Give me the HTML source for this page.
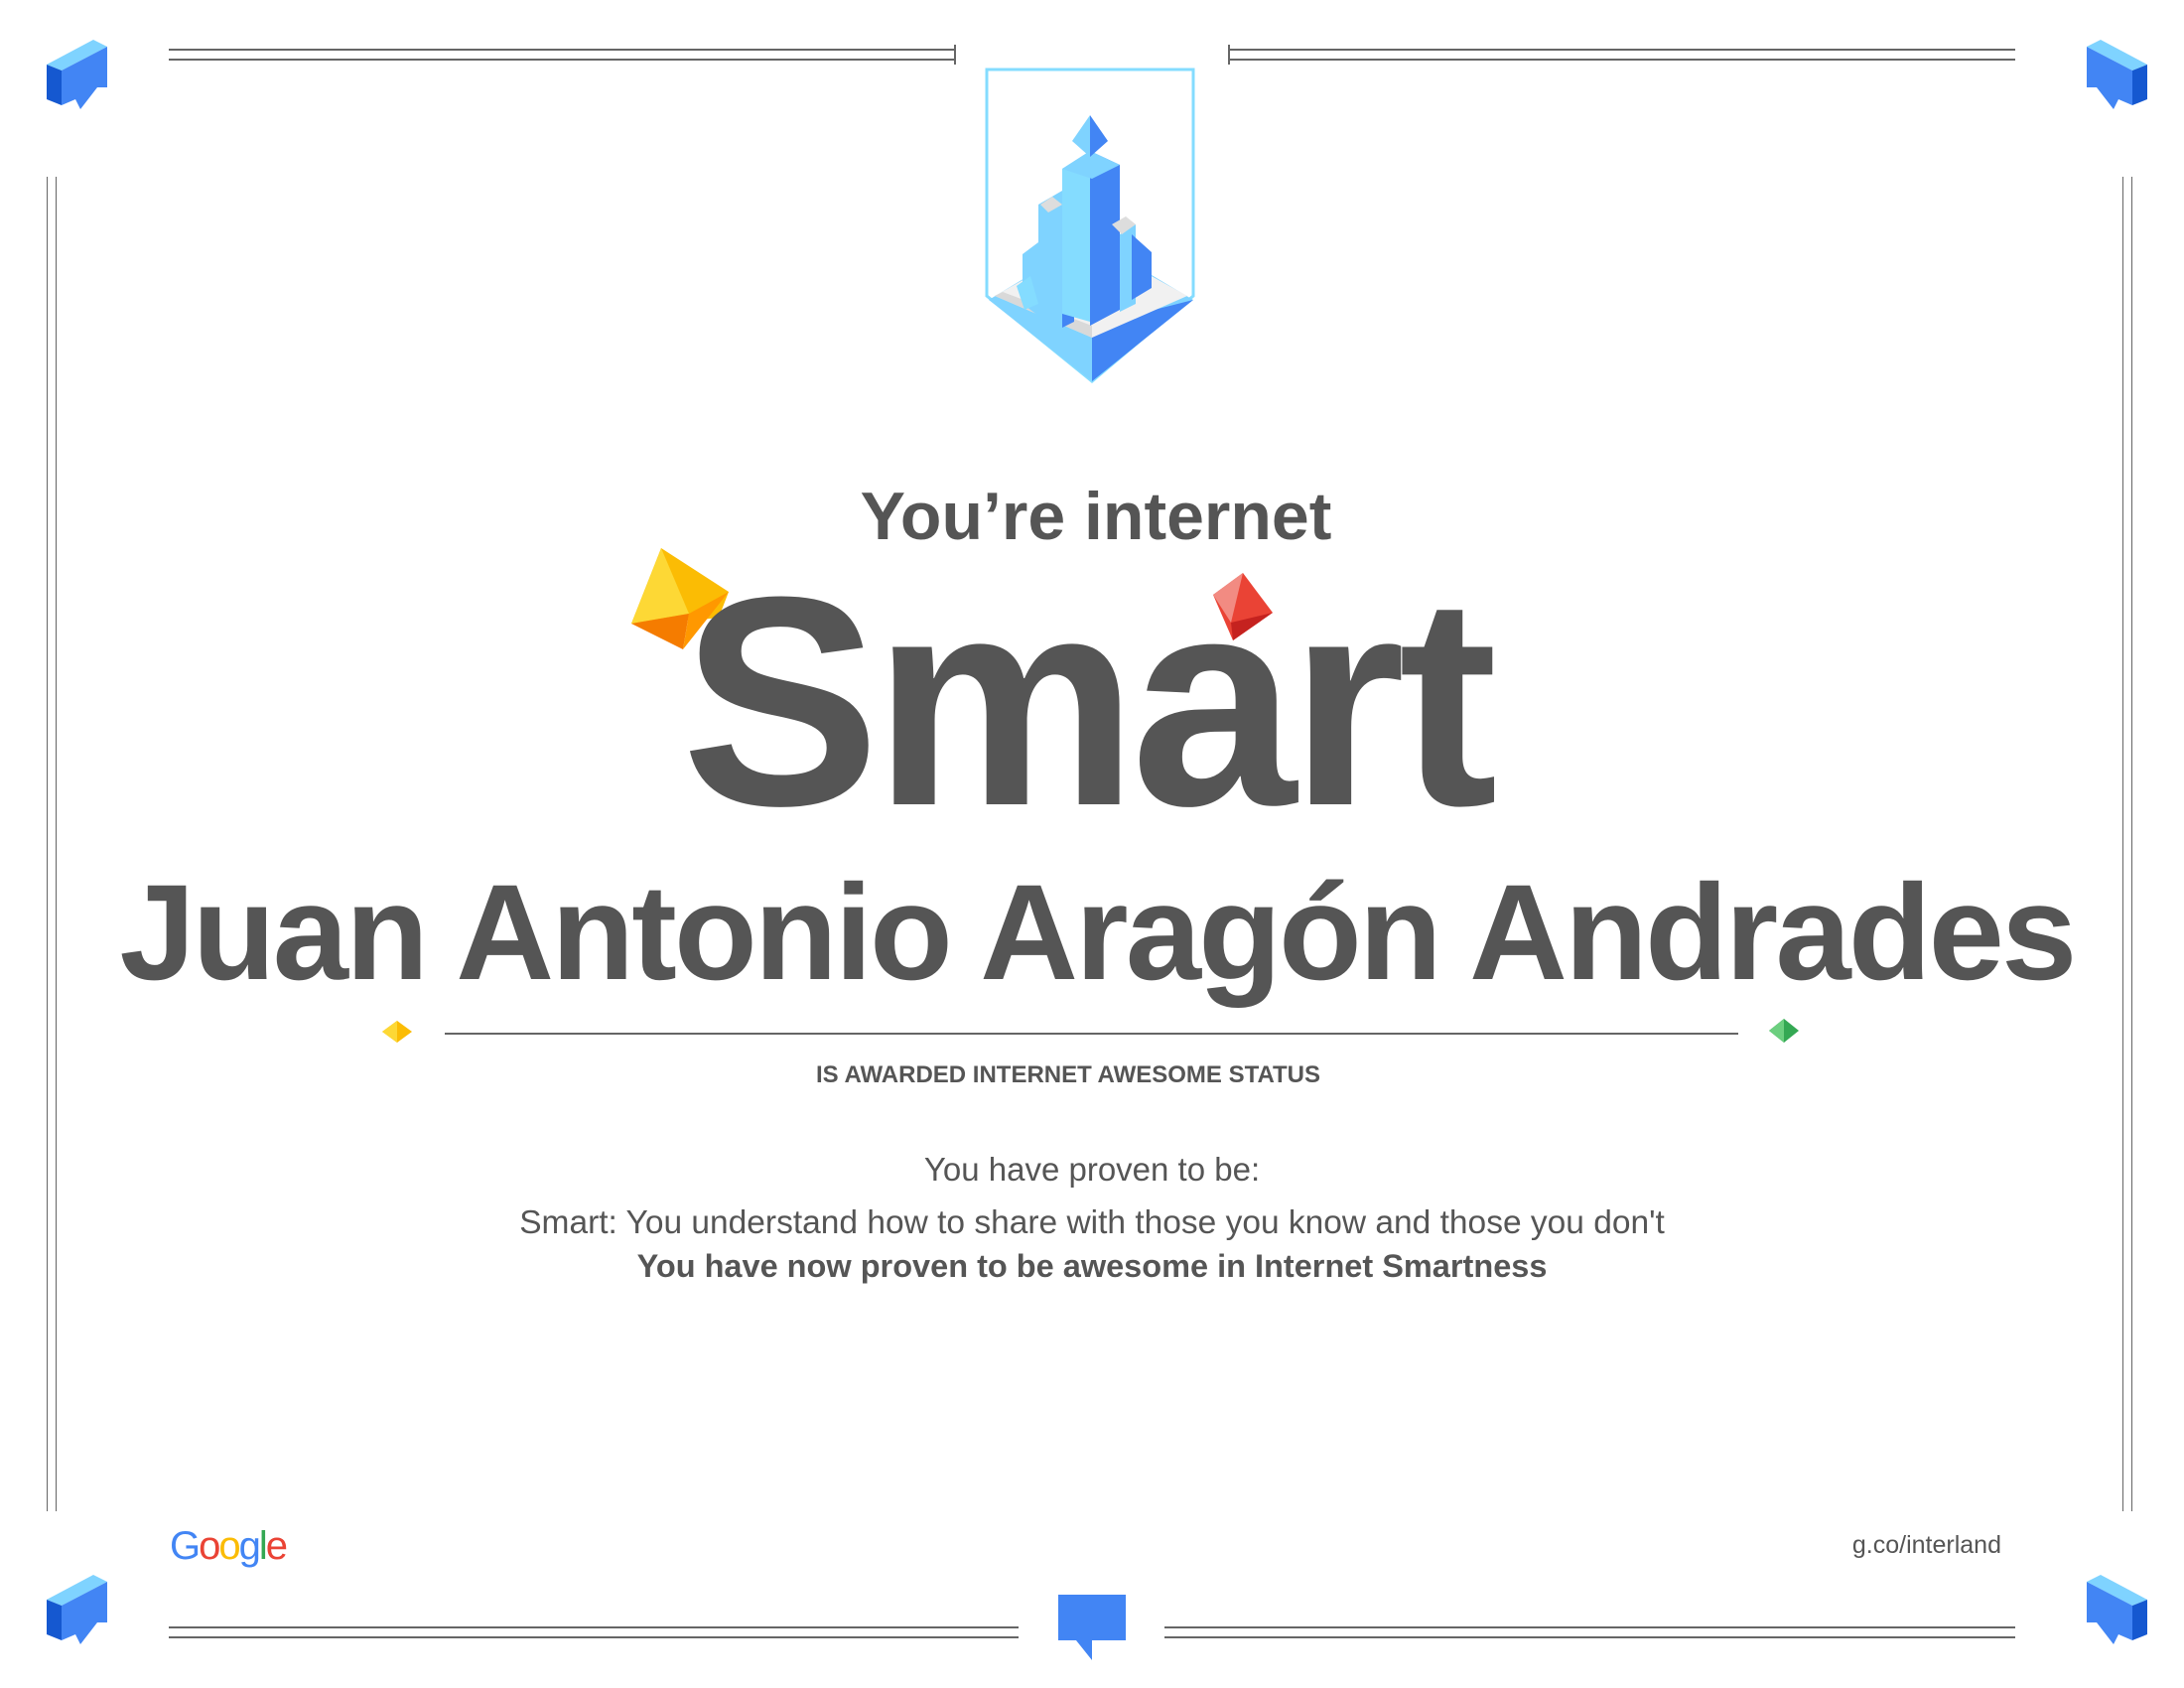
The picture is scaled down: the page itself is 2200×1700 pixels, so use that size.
<!DOCTYPE html>
<html><head><meta charset="utf-8"><style>
html,body{margin:0;padding:0;background:#fff}
body{width:2200px;height:1700px;position:relative;overflow:hidden;font-family:"Liberation Sans",sans-serif;color:#555}
.l{position:absolute;background:#666}
.t{position:absolute;white-space:nowrap;text-align:center}
svg{position:absolute}
</style></head><body>
<div class="l" style="left:170px;top:49px;width:792px;height:2px"></div>
<div class="l" style="left:170px;top:59px;width:792px;height:2px"></div>
<div class="l" style="left:961px;top:45px;width:2px;height:20px"></div>
<div class="l" style="left:1237px;top:49px;width:793px;height:2px"></div>
<div class="l" style="left:1237px;top:59px;width:793px;height:2px"></div>
<div class="l" style="left:1237px;top:45px;width:2px;height:20px"></div>
<div class="l" style="left:47px;top:178px;width:1px;height:1344px"></div>
<div class="l" style="left:56px;top:178px;width:1px;height:1344px"></div>
<div class="l" style="left:2138px;top:178px;width:1px;height:1344px"></div>
<div class="l" style="left:2147px;top:178px;width:1px;height:1344px"></div>
<div class="l" style="left:170px;top:1638px;width:856px;height:2px"></div>
<div class="l" style="left:170px;top:1648px;width:856px;height:2px"></div>
<div class="l" style="left:1173px;top:1638px;width:857px;height:2px"></div>
<div class="l" style="left:1173px;top:1648px;width:857px;height:2px"></div>

<svg style="left:47px;top:40px" width="62" height="72" viewBox="0 0 62 72">
<polygon points="0,25 47,0 61,7 15,31" fill="#7fd3ff"/>
<polygon points="15,31 61,7 61,48 51,48 34,70 29,60 15,66" fill="#4285f4"/>
<polygon points="0,25 15,31 15,66 0,60" fill="#1558d0"/>
</svg>
<svg style="left:2101px;top:40px" width="62" height="72" viewBox="0 0 62 72"><g transform="translate(62,0) scale(-1,1)">
<polygon points="0,25 47,0 61,7 15,31" fill="#7fd3ff"/>
<polygon points="15,31 61,7 61,48 51,48 34,70 29,60 15,66" fill="#4285f4"/>
<polygon points="0,25 15,31 15,66 0,60" fill="#1558d0"/>
</g></svg>
<svg style="left:47px;top:1586px" width="62" height="72" viewBox="0 0 62 72">
<polygon points="0,25 47,0 61,7 15,31" fill="#7fd3ff"/>
<polygon points="15,31 61,7 61,48 51,48 34,70 29,60 15,66" fill="#4285f4"/>
<polygon points="0,25 15,31 15,66 0,60" fill="#1558d0"/>
</svg>
<svg style="left:2101px;top:1586px" width="62" height="72" viewBox="0 0 62 72"><g transform="translate(62,0) scale(-1,1)">
<polygon points="0,25 47,0 61,7 15,31" fill="#7fd3ff"/>
<polygon points="15,31 61,7 61,48 51,48 34,70 29,60 15,66" fill="#4285f4"/>
<polygon points="0,25 15,31 15,66 0,60" fill="#1558d0"/>
</g></svg>
<svg style="left:1066px;top:1606px" width="70" height="66" viewBox="0 0 70 66">
<polygon points="0,0 68,0 68,46 34,46 34,66 18,46 0,46" fill="#4285f4"/>
</svg>

<svg style="left:990px;top:66px" width="218" height="322" viewBox="0 0 218 322">
<path d="M4,4 H212 V232 L110,318 L4,232 Z" fill="#fff" stroke="#84dcff" stroke-width="3"/>
<polygon points="6,236 108,174 212,236 110,318" fill="#7fd3ff"/>
<polygon points="110,262 212,236 110,318" fill="#4285f4"/>
<polygon points="12,232 108,178 206,232 110,274" fill="#f1f1f1"/>
<polygon points="12,232 110,274 110,262 20,228" fill="#d9d9d9"/>
<polygon points="40,190 56,178 56,252 40,240" fill="#7fd3ff"/>
<polygon points="56,140 80,126 80,264 56,252" fill="#7fd3ff"/>
<polygon points="80,126 80,264 92,258 92,130" fill="#4285f4"/>
<polygon points="80,104 108,86 108,258 80,250" fill="#84dcff"/>
<polygon points="108,86 138,100 138,246 108,262" fill="#4285f4"/>
<polygon points="80,104 108,86 138,100 110,114" fill="#7fd3ff"/>
<polygon points="138,170 154,160 154,240 138,248" fill="#7fd3ff"/>
<polygon points="150,170 170,188 170,224 150,236" fill="#4285f4"/>
<polygon points="108,50 90,76 108,92 108,50" fill="#7fd3ff"/>
<polygon points="108,50 126,76 108,92" fill="#4285f4"/>
<polygon points="130,160 144,152 154,160 140,170" fill="#ddd"/>
<polygon points="58,140 70,132 80,140 66,148" fill="#ddd"/>
<polygon points="34,222 48,212 56,240 42,246" fill="#84dcff"/>
</svg>

<div class="t" style="left:0;width:2208px;top:482px;font-size:68px;font-weight:bold;line-height:76px">You’re internet</div>

<svg style="left:636px;top:550px" width="100" height="104" viewBox="0 0 100 104">
<polygon points="30,2 98,46 88,72 70,74 0,78" fill="#fbbc04"/>
<polygon points="30,2 58,68 0,78" fill="#fdd835"/>
<polygon points="0,78 58,68 52,104" fill="#f57c00"/>
<polygon points="58,68 98,46 52,104" fill="#ff9800"/>
</svg>
<svg style="left:1222px;top:577px" width="60" height="68" viewBox="0 0 60 68">
<polygon points="30,0 60,40 20,68 0,22" fill="#ea4335"/>
<polygon points="30,0 18,50 0,22" fill="#f28b82"/>
<polygon points="18,50 60,40 20,68" fill="#c5221f"/>
</svg>

<div class="t" style="left:0;width:2200px;top:556px;font-size:300px;font-weight:bold;line-height:300px;letter-spacing:-7px;text-indent:-12px">Smart</div>

<div class="t" style="left:0;width:2210px;top:865px;font-size:137px;font-weight:bold;line-height:150px;letter-spacing:-2.8px">Juan Antonio Aragón Andrades</div>

<div class="l" style="left:448px;top:1040px;width:1303px;height:2px"></div>
<svg style="left:385px;top:1028px" width="30" height="22" viewBox="0 0 30 22"><polygon points="15,0 30,11 15,22 0,11" fill="#fbbc04"/><polygon points="15,0 0,11 15,22" fill="#fdd835"/></svg>
<svg style="left:1782px;top:1026px" width="30" height="24" viewBox="0 0 30 24"><polygon points="15,0 30,12 15,24 0,12" fill="#34a853"/><polygon points="15,0 0,12 15,24" fill="#6ccf7f"/></svg>

<div class="t" style="left:0;width:2152px;top:1068px;font-size:24px;font-weight:bold;line-height:30px">IS AWARDED INTERNET AWESOME STATUS</div>
<div class="t" style="left:0;width:2200px;top:1158px;font-size:33px;line-height:40px">You have proven to be:</div>
<div class="t" style="left:0;width:2200px;top:1212px;font-size:33.5px;line-height:40px">Smart: You understand how to share with those you know and those you don't</div>
<div class="t" style="left:0;width:2200px;top:1255px;font-size:32.5px;font-weight:bold;line-height:40px">You have now proven to be awesome in Internet Smartness</div>

<div style="position:absolute;left:171px;top:1534px;font-size:40px;line-height:46px;letter-spacing:-2px"><span style="color:#4285f4">G</span><span style="color:#ea4335">o</span><span style="color:#fbbc05">o</span><span style="color:#4285f4">g</span><span style="color:#34a853">l</span><span style="color:#ea4335">e</span></div>
<div style="position:absolute;right:184px;top:1541px;font-size:25px;line-height:30px;color:#555">g.co/interland</div>
</body></html>
